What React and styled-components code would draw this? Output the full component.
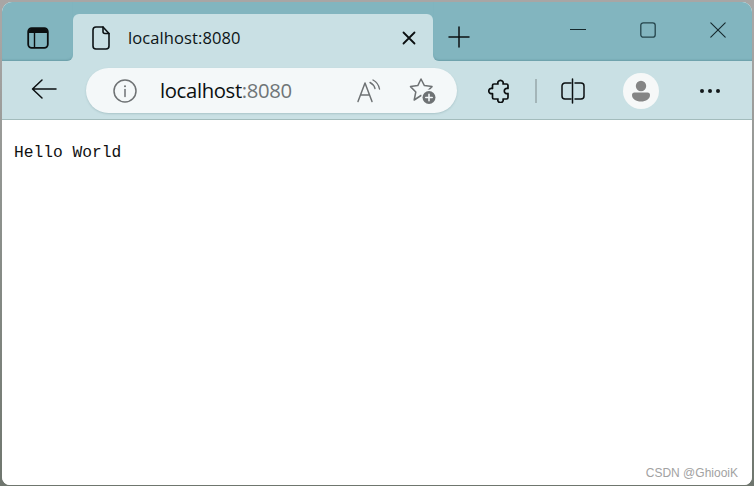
import React from 'react';
import styled, { createGlobalStyle } from 'styled-components';

const Global = createGlobalStyle`
  html, body {
    margin: 0;
    padding: 0;
    width: 754px;
    height: 486px;
    overflow: hidden;
    background: #8f938f;
    font-family: "Open Sans", "Noto Sans", sans-serif;
  }
`;

const Desktop = styled.div`
  width: 754px;
  height: 486px;
  box-sizing: border-box;
  padding: 2px 2px 1px 2px;
  background: linear-gradient(180deg, #a8a6a5 0, #a8a6a5 30px, #8f938f 200px, #6f766e 100%);
`;

const Browser = styled.div`
  height: 100%;
  display: flex;
  flex-direction: column;
  border-radius: 10px 10px 8px 8px;
  overflow: hidden;
  background: #fff;
`;

const TitleBar = styled.div`
  height: 59px;
  display: flex;
  background: #c9e0e4;
`;

const StripStart = styled.div`
  width: 71px;
  display: flex;
  align-items: center;
  justify-content: center;
  padding: 0 0 0 1px;
  box-sizing: border-box;
  background: #82b5bf;
  border-bottom-right-radius: 6px;
  box-shadow: inset 0 -2px 2px -1px rgba(60, 110, 120, .35);
  svg { margin-top: 12px; }
`;

const TabSlot = styled.div`
  width: 360px;
  padding-top: 12px;
  box-sizing: border-box;
  background: #82b5bf;
`;

const Tab = styled.div`
  height: 47px;
  display: flex;
  align-items: center;
  padding: 0 17px 0 19px;
  background: #c9e0e4;
  border-radius: 6px 6px 0 0;
  color: #0c1416;
`;

const TabTitle = styled.span`
  flex: 1;
  margin-left: 18px;
  font-size: 16.5px;
  letter-spacing: .1px;
`;

const StripEnd = styled.div`
  flex: 1;
  display: flex;
  align-items: center;
  justify-content: space-between;
  padding: 0 26px 7px 15px;
  background: #82b5bf;
  border-bottom-left-radius: 6px;
  box-shadow: inset 0 -2px 2px -1px rgba(60, 110, 120, .35);
`;

const NewTab = styled.div`
  display: flex;
  margin-top: 17px;
`;

const WindowControls = styled.div`
  display: flex;
  align-items: center;
  gap: 54px;
  margin-top: 4px;
`;

const Toolbar = styled.div`
  height: 59px;
  display: flex;
  align-items: center;
  box-sizing: border-box;
  padding: 1px 0 0 29px;
  background: #c9e0e4;
  border-bottom: 1px solid #a3bcbc;
`;

const BackArrow = styled.svg`
  margin-bottom: 3px;
`;

const AddressBar = styled.div`
  width: 371px;
  height: 45px;
  margin-left: 29px;
  display: flex;
  align-items: center;
  padding: 0 20px 0 27px;
  box-sizing: border-box;
  background: #f4f8f9;
  border-radius: 23px;
  box-shadow: 0 1px 2px rgba(80, 120, 125, .25);
`;

const Url = styled.div`
  flex: 1;
  margin: 0 0 2px 23px;
  font-size: 20.3px;
  letter-spacing: -.35px;
  color: #0a0f10;
`;

const Port = styled.span`
  color: #6f7577;
`;

const AddressIcons = styled.div`
  display: flex;
  align-items: center;
  gap: 28px;
`;

const ToolIcons = styled.div`
  display: flex;
  align-items: center;
  margin-left: 31px;
`;

const Divider = styled.div`
  width: 2px;
  height: 24px;
  margin: 0 24px 0 23px;
  background: #a3b5b8;
`;

const Avatar = styled.div`
  width: 36px;
  height: 36px;
  margin: 0 41px 0 38px;
  display: flex;
  align-items: center;
  justify-content: center;
  border-radius: 50%;
  background: #f6f8f8;
`;

const Page = styled.main`
  flex: 1;
  position: relative;
  background: #fff;
  padding: 23px 12px;
`;

const Greeting = styled.div`
  font-family: "Liberation Mono", "DejaVu Sans Mono", monospace;
  font-size: 16.25px;
  line-height: 20px;
  color: #101010;
`;

const Watermark = styled.div`
  position: absolute;
  right: 14px;
  bottom: 5px;
  font-family: "Liberation Sans", sans-serif;
  font-size: 12px;
  color: #a2a2a2;
`;

const stroke = { fill: 'none', stroke: 'currentColor', strokeLinecap: 'round', strokeLinejoin: 'round' };

const App = () => (
  <>
    <Global />
    <Desktop>
      <Browser>
        <TitleBar>
          <StripStart>
            <svg width="22" height="22" viewBox="0 0 22 22" color="#0b0f10">
              <rect x="1.2" y="1.2" width="19.6" height="19.6" rx="3.5" {...stroke} strokeWidth="1.8" />
              <path d="M2 5V3.5Q2 2 3.5 2h15Q20 2 20 3.5V6H2z" fill="#0b0f10" />
              <path d="M7.5 6v14" {...stroke} strokeWidth="1.4" />
            </svg>
          </StripStart>
          <TabSlot>
            <Tab>
              <svg width="18" height="24" viewBox="0 0 18 24" color="#0c1214">
                <path d="M4 1h7l6 6.5V20a3 3 0 0 1-3 3H4a3 3 0 0 1-3-3V4a3 3 0 0 1 3-3z" {...stroke} strokeWidth="1.6" />
                <path d="M11 1v4.5a2 2 0 0 0 2 2h4" {...stroke} strokeWidth="1.6" />
              </svg>
              <TabTitle>localhost:8080</TabTitle>
              <svg width="14" height="14" viewBox="0 0 14 14" color="#0b0f10">
                <path d="M1.5 1.5l11 11M12.5 1.5l-11 11" {...stroke} strokeWidth="1.8" />
              </svg>
            </Tab>
          </TabSlot>
          <StripEnd>
            <NewTab>
              <svg width="22" height="22" viewBox="0 0 22 22" color="#0b1012">
                <path d="M11 1v20M1 11h20" {...stroke} strokeWidth="1.5" />
              </svg>
            </NewTab>
            <WindowControls>
              <svg width="16" height="16" viewBox="0 0 16 16" color="#15282c">
                <path d="M.5 7.500h15" {...stroke} strokeWidth="1.2" />
              </svg>
              <svg width="16" height="16" viewBox="0 0 16 16" color="#24444b">
                <rect x=".8" y=".8" width="14.4" height="14.4" rx="2.5" {...stroke} strokeWidth="1.3" />
              </svg>
              <svg width="16" height="16" viewBox="0 0 16 16" color="#15282c">
                <path d="M.8.8l14.4 14.4M15.2.8L.8 15.2" {...stroke} strokeWidth="1.1" />
              </svg>
            </WindowControls>
          </StripEnd>
        </TitleBar>
        <Toolbar>
          <BackArrow width="26" height="22" viewBox="0 0 26 22" color="#0b0f10">
            <path d="M25 11H2M11 2l-9.5 9 9.5 9" {...stroke} strokeWidth="1.5" />
          </BackArrow>
          <AddressBar>
            <svg width="24" height="24" viewBox="0 0 24 24" color="#6e7274">
              <circle cx="12" cy="12" r="11" {...stroke} strokeWidth="1.5" />
              <path d="M12 10.5v7" {...stroke} strokeWidth="1.5" />
              <circle cx="12" cy="7.2" r="1" fill="#6e7274" />
            </svg>
            <Url>localhost<Port>:8080</Port></Url>
            <AddressIcons>
              <svg width="24" height="24" viewBox="0 0 24 24" color="#6e7274">
                <path d="M1 22.500L8 4l7 18.500M3.500 16h9" {...stroke} strokeWidth="1.5" />
                <path d="M13 3.500q4 2 5 6" {...stroke} strokeWidth="1.4" />
                <path d="M16 1q5.500 3 6.500 9" {...stroke} strokeWidth="1.4" />
              </svg>
              <svg width="28" height="28" viewBox="0 0 28 28" color="#6e7274">
                <path d="M12 2l3.400 6.600 7.600 1-5.500 5.400 1.300 7-6.800-3.500-6.800 4.500 1.600-8L1.500 9.600l7.300-1z" {...stroke} strokeWidth="1.5" />
                <circle cx="20" cy="20.500" r="8" fill="#f4f8f9" />
                <circle cx="20" cy="20.500" r="6.500" fill="#6e7274" />
                <path d="M20 17.300v6.400M16.800 20.500h6.400" fill="none" stroke="#f4f8f9" strokeWidth="1.6" strokeLinecap="round" />
              </svg>
            </AddressIcons>
          </AddressBar>
          <ToolIcons>
            <svg width="24" height="24" viewBox="0 0 24 24" color="#0b0f10">
              <path d="M6 5H10a2.700 2.700 0 1 1 5 0H18.500a1.500 1.500 0 0 1 1.500 1.500V9.500a2.700 2.700 0 1 0 0 5V18.500a1.500 1.500 0 0 1-1.500 1.500H15a2.700 2.700 0 1 1-5 0H6a1.500 1.500 0 0 1-1.500-1.500V14.500a2.700 2.700 0 1 1 0-5V6.500A1.500 1.500 0 0 1 6 5z" {...stroke} strokeWidth="1.7" />
            </svg>
            <Divider />
            <svg width="24" height="26" viewBox="0 0 24 26" color="#0b0f10">
              <path d="M10 5H4a3 3 0 0 0-3 3v10a3 3 0 0 0 3 3h6M14 5h6a3 3 0 0 1 3 3v10a3 3 0 0 1-3 3h-6" {...stroke} strokeWidth="1.5" />
              <path d="M11.500 1v24" {...stroke} strokeWidth="1.5" />
            </svg>
            <Avatar>
              <svg width="18" height="22" viewBox="0 0 18 22" color="#858585">
                <circle cx="9" cy="6" r="5.200" fill="#858585" />
                <path d="M0 15a2.500 2.500 0 0 1 2.500-2.500h13A2.500 2.500 0 0 1 18 15c0 4-4 6.500-9 6.500S0 19 0 15z" fill="#858585" />
              </svg>
            </Avatar>
            <svg width="20" height="4" viewBox="0 0 20 4" color="#12181a">
              <circle cx="2" cy="2" r="2" fill="#12181a" />
              <circle cx="10" cy="2" r="2" fill="#12181a" />
              <circle cx="18" cy="2" r="2" fill="#12181a" />
            </svg>
          </ToolIcons>
        </Toolbar>
        <Page>
          <Greeting>Hello World</Greeting>
          <Watermark>CSDN @GhiooiK</Watermark>
        </Page>
      </Browser>
    </Desktop>
  </>
);

export default App;
